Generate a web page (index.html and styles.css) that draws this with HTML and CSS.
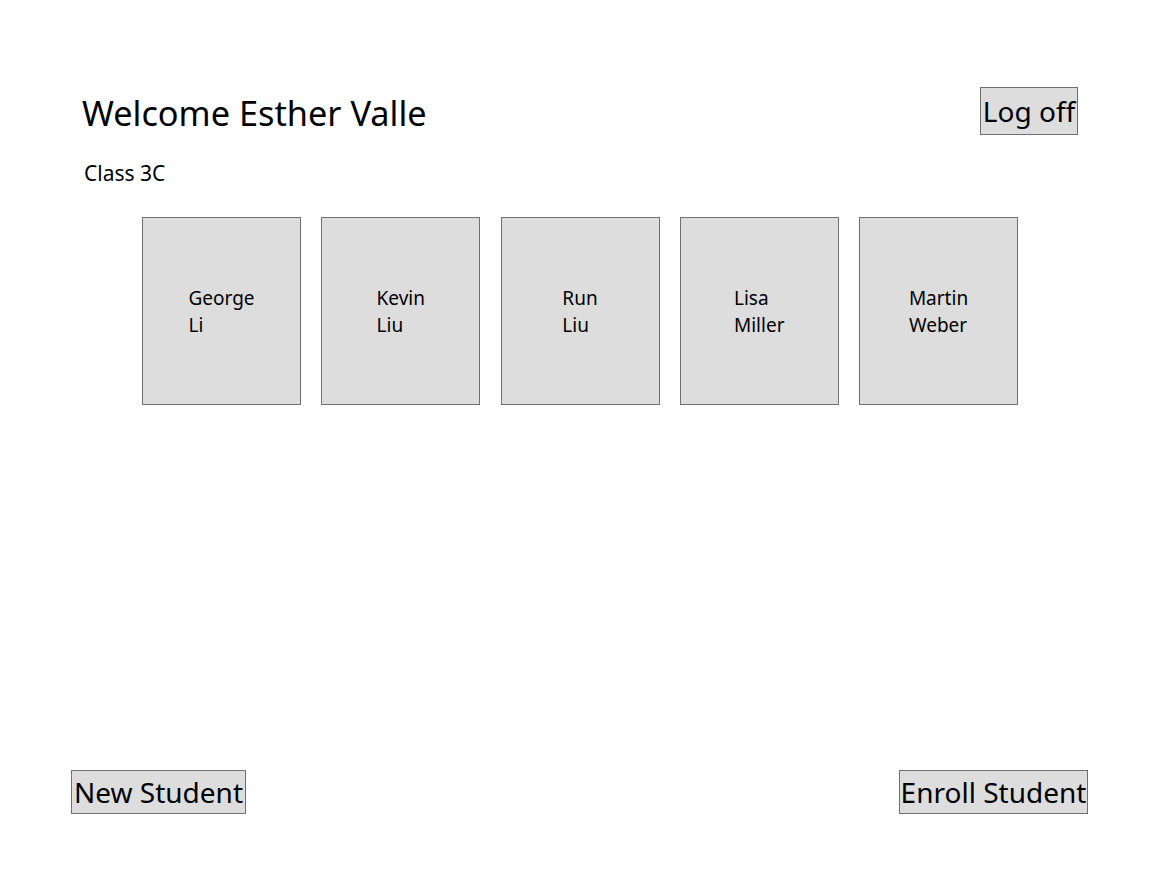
FILE: index.html
```html
<!DOCTYPE html>
<html lang="en">
<head>
<meta charset="utf-8">
<title>Class 3C</title>
<link rel="stylesheet" href="styles.css">
</head>
<body>
<div class="page">
  <header class="header">
    <h1 class="title">Welcome Esther Valle</h1>
    <button class="btn btn-logoff">Log off</button>
  </header>
  <div class="class-label">Class 3C</div>
  <div class="students">
    <div class="card"><div class="name">George<br>Li</div></div>
    <div class="card"><div class="name">Kevin<br>Liu</div></div>
    <div class="card"><div class="name">Run<br>Liu</div></div>
    <div class="card"><div class="name">Lisa<br>Miller</div></div>
    <div class="card"><div class="name">Martin<br>Weber</div></div>
  </div>
  <footer class="footer">
    <button class="btn btn-new">New Student</button>
    <button class="btn btn-enroll">Enroll Student</button>
  </footer>
</div>
</body>
</html>
```
FILE: styles.css
```css
html, body {
  margin: 0;
  padding: 0;
  background: #ffffff;
}
body {
  font-family: "Noto Sans", "Open Sans", sans-serif;
  color: #000;
}
.page {
  box-sizing: border-box;
  height: 100vh;
  padding: 87px 85px 58px 72px;
  display: flex;
  flex-direction: column;
}
.header {
  display: flex;
  justify-content: space-between;
  align-items: center;
  height: 48px;
  margin: 0 10px;
}
.title {
  margin: 0;
  font-weight: 400;
  font-size: 34.3px;
  line-height: 48px;
  position: relative;
  top: 2px;
}
.btn {
  font-family: "Noto Sans", "Open Sans", sans-serif;
  background: #dddddd;
  border: 1px solid #707070;
  color: #000;
  font-size: 28px;
  padding: 0;
  box-sizing: border-box;
  white-space: nowrap;
  line-height: 1;
}
.btn-logoff {
  width: 98px;
  height: 48px;
}
.class-label {
  font-size: 21px;
  margin: 25px 0 0 12px;
  line-height: 27px;
}
.students {
  display: flex;
  justify-content: center;
  gap: 20.25px;
  margin-top: 30px;
}
.card {
  box-sizing: border-box;
  width: 159px;
  height: 188px;
  background: #dddddd;
  border: 1px solid #707070;
  display: flex;
  align-items: center;
  justify-content: center;
}
.name {
  font-size: 19px;
  line-height: 27px;
  position: relative;
  top: 1px;
}
.footer {
  margin-top: auto;
  display: flex;
  justify-content: space-between;
}
.btn-new {
  width: 175px;
  height: 44px;
  margin-left: -1px;
}
.btn-enroll {
  width: 189px;
  height: 44px;
}
```
